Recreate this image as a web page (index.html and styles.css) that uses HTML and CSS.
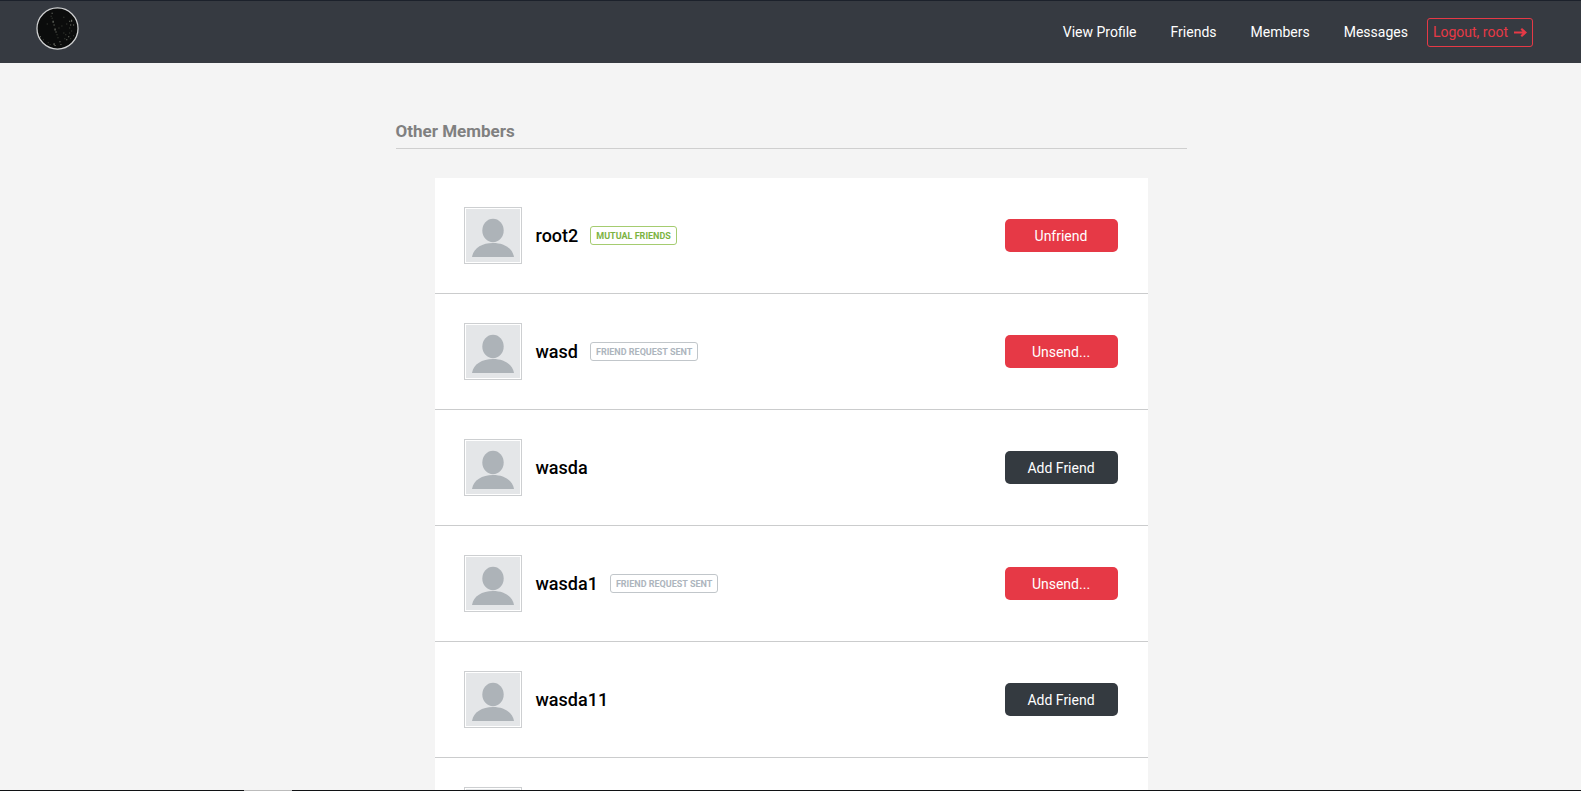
FILE: index.html
```html
<!DOCTYPE html>
<html lang="en">
<head>
<meta charset="utf-8">
<title>Members</title>
<link rel="stylesheet" href="styles.css">
</head>
<body>
<svg class="symbols" aria-hidden="true">
  <symbol id="person" viewBox="0 0 54 53">
    <rect width="54" height="53" fill="#e4e6e8"/>
    <ellipse cx="27" cy="21.500" rx="10.700" ry="11.700" fill="#adb3b8"/>
    <path d="M6 48C7.500 39 16 34 27 34S46.500 39 48 48Z" fill="#adb3b8"/>
  </symbol>
</svg>
<header class="topbar">
  <a class="logo" href="#" aria-label="Home">
    <svg viewBox="0 0 44 44" aria-hidden="true">
      <circle cx="22" cy="22" r="21" fill="#0b0c0c" stroke="#d0d1d2" stroke-width="1.300"/>
      <g fill="#85887d">
        <path d="M16 6h1v1h-1zM17 14h1v2h-1zM18 18h1v1h-1zM19 22h1v2h-1zM20 25h1v1h-1zM36 13h1v2h-1zM34 14h1v1h-1zM35 18h1v1h-1zM38 18h1v1h-1zM4 30h1v1h-1zM18 37h1v2h-1zM19 39h1v1h-1zM24 35h1v1h-1zM25 38h1v1h-1zM31 33h1v1h-1zM33 30h1v1h-1z"/>
      </g>
      <g fill="#45483f">
        <path d="M15 9h1v1h-1zM16 11h1v1h-1zM11 17h1v1h-1zM21 28h1v1h-1zM22 31h1v1h-1zM28 26h1v1h-1zM30 28h1v1h-1zM34 26h1v1h-1zM36 24h1v1h-1zM29 32h1v1h-1zM35 32h1v1h-1zM38 29h1v1h-1zM12 36h1v1h-1zM14 38h1v1h-1zM7 33h1v1h-1zM23 21h1v1h-1zM26 19h1v1h-1zM31 17h1v1h-1zM28 10h1v1h-1zM34 21h1v1h-1z"/>
      </g>
    </svg>
  </a>
  <nav class="nav">
    <a class="nav-link" href="#">View Profile</a>
    <a class="nav-link" href="#">Friends</a>
    <a class="nav-link" href="#">Members</a>
    <a class="nav-link" href="#">Messages</a>
    <a class="logout" href="#">Logout, root
      <svg class="arrow" viewBox="0 0 13 11" aria-hidden="true"><path d="M0 4.500H8.500L6.500 2.500L8 1L13 5.500L8 10L6.500 8.500L8.500 6.500H0Z" fill="currentColor"/></svg>
    </a>
  </nav>
</header>
<main class="content">
  <section class="members">
    <h1 class="title">Other Members</h1>
    <ul class="list">
      <li class="member">
        <svg class="avatar" role="img" aria-label="root2"><use href="#person"/></svg>
        <a class="name" href="#">root2</a><span class="tag tag-mutual">MUTUAL FRIENDS</span>
        <button class="action action-remove" type="button">Unfriend</button>
      </li>
      <li class="member">
        <svg class="avatar" role="img" aria-label="wasd"><use href="#person"/></svg>
        <a class="name" href="#">wasd</a><span class="tag tag-sent">FRIEND REQUEST SENT</span>
        <button class="action action-remove" type="button">Unsend...</button>
      </li>
      <li class="member">
        <svg class="avatar" role="img" aria-label="wasda"><use href="#person"/></svg>
        <a class="name" href="#">wasda</a>
        <button class="action action-add" type="button">Add Friend</button>
      </li>
      <li class="member">
        <svg class="avatar" role="img" aria-label="wasda1"><use href="#person"/></svg>
        <a class="name" href="#">wasda1</a><span class="tag tag-sent">FRIEND REQUEST SENT</span>
        <button class="action action-remove" type="button">Unsend...</button>
      </li>
      <li class="member">
        <svg class="avatar" role="img" aria-label="wasda11"><use href="#person"/></svg>
        <a class="name" href="#">wasda11</a>
        <button class="action action-add" type="button">Add Friend</button>
      </li>
      <li class="member">
        <svg class="avatar" role="img" aria-label="Member"><use href="#person"/></svg>
      </li>
    </ul>
  </section>
</main>
<div class="edge"></div>
</body>
</html>
```
FILE: styles.css
```css
* { box-sizing: border-box; }
body {
  margin: 0;
  height: 100vh;
  display: flex;
  flex-direction: column;
  overflow: hidden;
  background: #f4f4f4;
  color: #000;
  font-family: Roboto, sans-serif;
  font-size: 14px;
}
a { color: inherit; text-decoration: none; }
.symbols { position: absolute; width: 0; height: 0; }
.topbar {
  flex: none;
  display: flex;
  justify-content: space-between;
  padding: 0 48px 0 36px;
  height: 63px;
  background: #363a41;
  border-top: 1px solid #1c212b;
}
.logo { padding-top: 6px; }
.logo svg { display: block; width: 43px; height: 43px; }
.nav { display: flex; align-items: center; color: #fff; }
.nav-link { padding: 0 17px; }
.nav-link:nth-child(4) { padding-right: 19px; }
.logout {
  display: flex;
  align-items: center;
  gap: 6px;
  height: 29px;
  padding: 0 5px;
  border: 1px solid #e63946;
  border-radius: 3px;
  color: #e63946;
}
.arrow { width: 13px; height: 11px; }
.content { flex: 1; min-height: 0; margin-left: 1px; overflow: hidden; }
.members { width: calc(50% + 1px); margin: 0 auto; padding-top: 57px; }
.title {
  margin: 0 0 29px;
  padding-bottom: 5px;
  border-bottom: 1px solid #cfcfcf;
  color: #808080;
  font-size: 17px;
  line-height: 23px;
}
.list { margin: 0 39px; padding: 0; list-style: none; background: #fff; }
.member {
  display: flex;
  align-items: center;
  padding: 29px 30px 29px 29px;
  border-bottom: 1px solid #cbcccd;
}
.avatar {
  flex: none;
  width: 58px;
  height: 57px;
  padding: 1px;
  border: 1px solid #cdcfd1;
}
.name { margin-left: 14px; font-size: 18px; font-weight: 500; }
.tag {
  margin-left: 12px;
  padding: 1px 5px 0;
  border: 1px solid;
  border-radius: 3px;
  font-size: 9px;
  font-weight: 700;
  line-height: 16px;
}
.tag-mutual { border-color: #a5cc70; color: #7cb342; }
.tag-sent { border-color: #c1c6ca; color: #adb5bd; }
.action {
  width: 113px;
  height: 33px;
  margin-left: auto;
  padding: 0;
  border: 0;
  border-radius: 5px;
  color: #fff;
  font: inherit;
}
.action-remove { background: #e63946; }
.action-add { background: #343a40; }
.edge {
  flex: none;
  height: 1px;
  background: linear-gradient(to right, #101214 244px, #bbb 244px, #bbb 292px, #101214 292px);
}
```
